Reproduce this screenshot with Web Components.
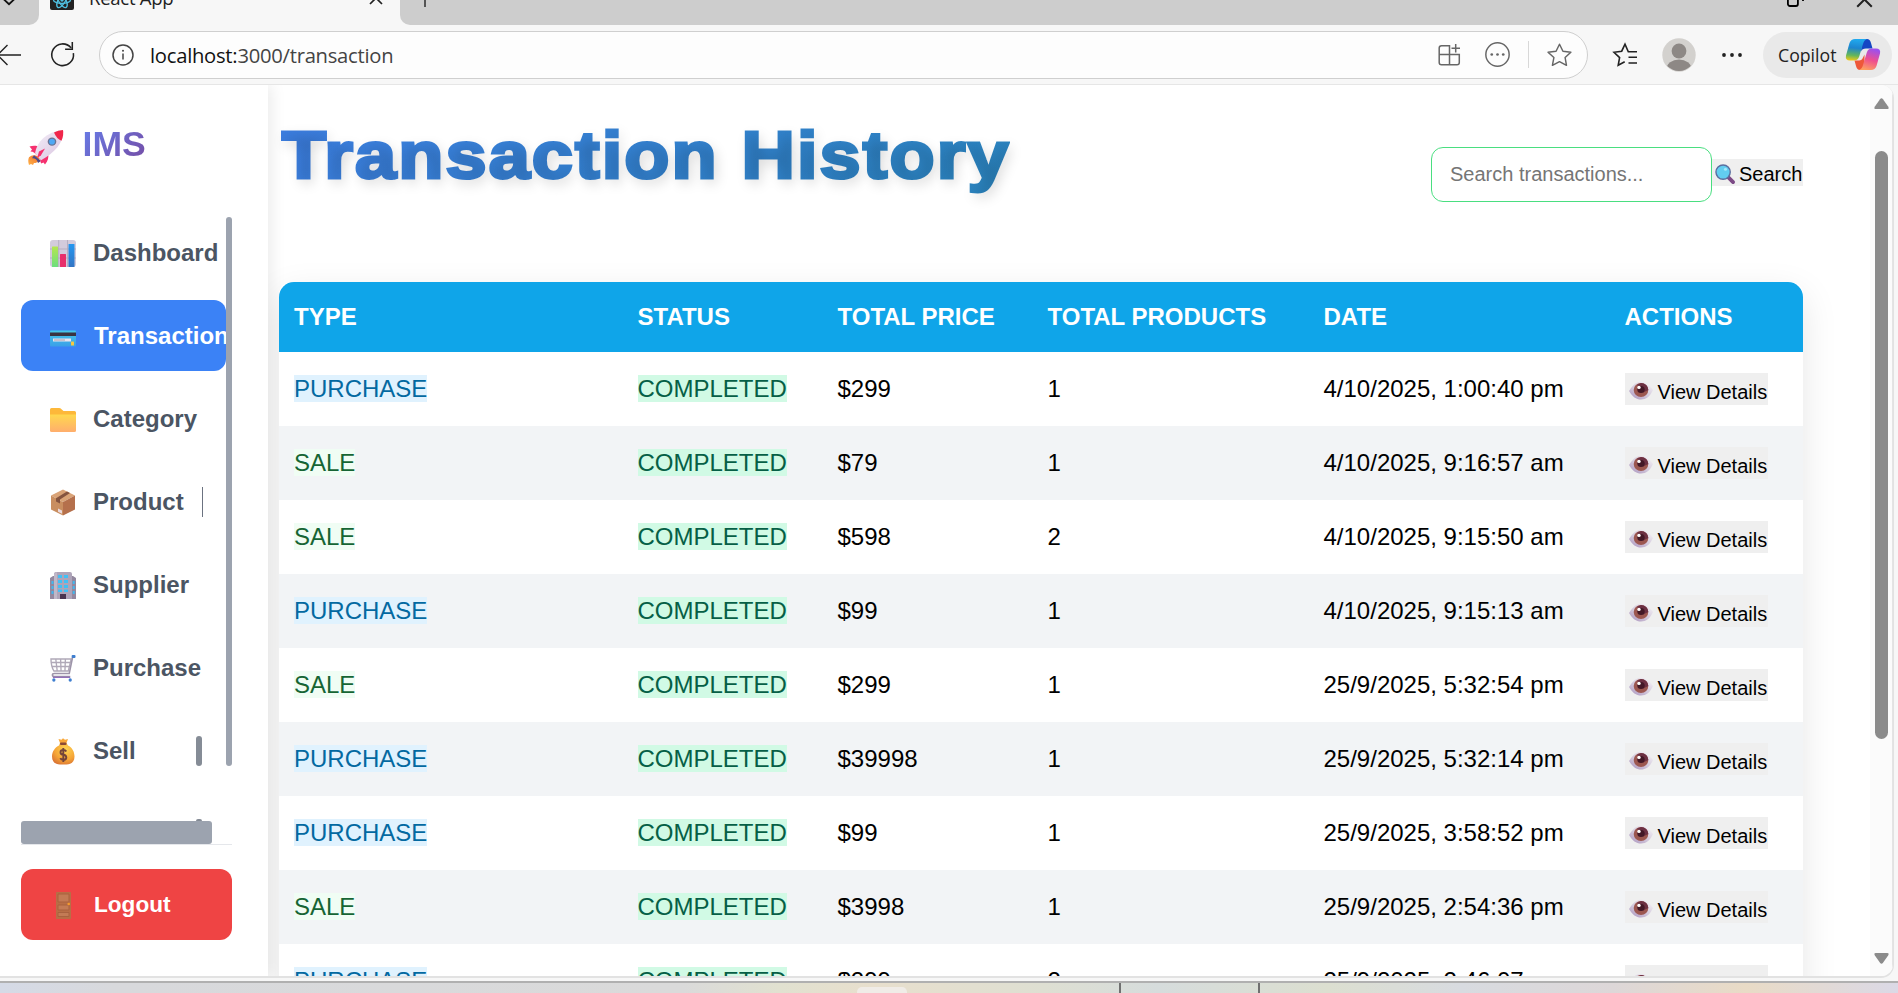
<!DOCTYPE html>
<html lang="en">
<head>
<meta charset="utf-8">
<title>React App</title>
<style>
html,body{margin:0;height:100%;overflow:hidden}
body{font-family:"Liberation Sans",Arial,sans-serif;background:#f7f7f7;color:#000}
</style>
</head>
<body>
<browser-window></browser-window>
<script>
const ICONS = {
rocket:['0 0 36 36','<defs><linearGradient id="r1" x1="0" y1="0" x2="1" y2="1"><stop offset="0" stop-color="#f4eff8"/><stop offset="1" stop-color="#d9c4e0"/></linearGradient><linearGradient id="r2" x1="1" y1="0" x2="0" y2="1"><stop offset="0" stop-color="#ee6a2b"/><stop offset="1" stop-color="#ffb347"/></linearGradient></defs><path d="M1 28c3-3 8-3 11 1-1 4-4 5-6 5l-1 2-2-1-2 1c-1-3-1-6 0-8z" fill="url(#r2)"/><path d="M6 26l7 6-3 2c-1-4-3-5-6-5z" fill="#4a4a8c"/><path d="M1.500 17c4-1.500 8-1 11 1l-4 8c-1-2-3-4-6-4l1.500-2zM12 30l8-6c1 4 0 8-3 11.500l-1.500-2-2.500 1z" fill="#f5316f"/><path d="M7 24C9 12 18 2 35 0c1 13-8 23-22 31z" fill="url(#r1)"/><path d="M26 2.500Q30 .5 35 0q1 5-1.500 11-5-2-7.500-8.500z" fill="#f0264a"/><circle cx="24" cy="12" r="4.300" fill="#687494"/><circle cx="24" cy="12" r="2.900" fill="#4ea8f5"/><path d="M11 22l6-3-4 7-4 3z" fill="#f5316f"/>'],
chart:['0 0 26 27','<defs><linearGradient id="c1" x1="0" y1="0" x2="0" y2="1"><stop offset="0" stop-color="#b5e650"/><stop offset="1" stop-color="#6ddf7f"/></linearGradient><linearGradient id="c2" x1="0" y1="0" x2="0" y2="1"><stop offset="0" stop-color="#2597f0"/><stop offset="1" stop-color="#3375c4"/></linearGradient></defs><rect width="26" height="27" rx="3" fill="#d3cbdc"/><path d="M8.7 0v27M17.5 0v27M0 9h26M0 18h26" stroke="#b0a7ba" stroke-width=".8"/><rect x="2" y="6.500" width="6" height="20.500" rx=".5" fill="url(#c1)"/><rect x="10" y="14" width="6" height="13" rx=".5" fill="#e72f6b"/><rect x="18.500" y="4" width="6" height="23" rx=".5" fill="url(#c2)"/>'],
card:['0 0 26 27','<defs><linearGradient id="k1" x1="0" y1="0" x2="0" y2="1"><stop offset="0" stop-color="#45c8e8"/><stop offset="1" stop-color="#3a9fe8"/></linearGradient></defs><rect y="7.500" width="26" height="16" rx="1" fill="url(#k1)"/><rect y="9.500" width="26" height="3.500" fill="#3a3340"/><rect x="3" y="15.500" width="18" height="3" fill="#e8e3ee"/><path d="M4 17h11" stroke="#a8a2b0"/><rect x="21" y="18.500" width="3" height="4" rx=".6" fill="#f5c842"/>'],
folder:['0 0 26 27','<defs><linearGradient id="f1" x1="0" y1="0" x2="0" y2="1"><stop offset="0" stop-color="#ffd84e"/><stop offset="1" stop-color="#ffae6d"/></linearGradient></defs><path d="M0 3.500Q0 2 1.500 2H9q1.500 0 2.500 1.200L13.500 5H24.500Q26 5 26 6.500V12H0z" fill="#fdb83a"/><path d="M0 8.500h26V24.500Q26 26 24.500 26H1.500Q0 26 0 24.500z" fill="url(#f1)"/>'],
box:['0 0 26 27','<path d="M13 0.500L25 6.500 13 13 1 6.500z" fill="#d9a377"/><path d="M1 6.500L13 13v13.500L1 20.500z" fill="#c98e60"/><path d="M25 6.500L13 13v13.500l12-6z" fill="#b5704c"/><path d="M6 9.200L17 2.600l3 1.500-10 6.500v4l-4-2z" fill="#85543f"/><path d="M8 19.500l4 2v3.200l-4-2z" fill="#ead9dc"/>'],
building:['0 0 26 27','<path d="M0 6l3-2h4v23H0zM19 4h4l3 2v21h-7z" fill="#93889f"/><path d="M4 2Q4 0 6 0h14q2 0 2 2v25H4z" fill="#aea4b9"/><path d="M4 2v25h3V0z" fill="#c0b8c8"/><path d="M8 3h4v3H8zM14 3h4v3h-4zM8 8h4v3H8zM14 8h4v3h-4zM8 13h4v3H8zM14 13h4v3h-4zM8 17.500h4v2.500H8zM14 17.500h4v2.500h-4z" fill="#42c0f5"/><path d="M1.500 9h2v3h-2zM1.500 14h2v3h-2zM1.500 19h2v3h-2zM22.700 9h2v3h-2zM22.700 14h2v3h-2zM22.700 19h2v3h-2z" fill="#42b7ee"/><path d="M10 22h6v5h-6z" fill="#4a3550"/>'],
cart:['0 0 27 27','<path d="M1 4h21l-3 12H4Q1 11 1 4zM1 7.500h20M2 11.500h18.500M6 4l1.500 12M11 4l.5 12M16 4l-.5 12" fill="none" stroke="#b0a9b8" stroke-width="1.400"/><path d="M23.500 2L20 18.500H4.500q-2 0-2 1.500t2 1.500H21" fill="none" stroke="#9d94a9" stroke-width="1.600"/><path d="M3 22.300h18" stroke="#8a63b5" stroke-width="1.200"/><rect x="22.500" y="0" width="4" height="3" rx="1" fill="#3f7fd0"/><circle cx="4" cy="25" r="1.700" fill="#3f7fd0"/><circle cx="21" cy="25" r="1.700" fill="#3f7fd0"/>'],
money:['0 0 26 27','<defs><radialGradient id="m1" cx=".6" cy=".3" r=".8"><stop offset="0" stop-color="#ffd552"/><stop offset=".6" stop-color="#f5a436"/><stop offset="1" stop-color="#d66e34"/></radialGradient></defs><path d="M10 5L8.500 1l3 .8L13 .3l2 1.500 3-.8L16.500 5z" fill="#f9a738"/><path d="M10 5h6.500l1.500 2.500c4 2 6.500 6 6.500 11 0 5-3 8-8 8H10c-5 0-8-3-8-8 0-5 3-9 7-11z" fill="url(#m1)"/><rect x="10" y="4.500" width="6.500" height="2.600" rx="1" fill="#8b4a35"/><path d="M16.300 13.500Q15.500 12 13.300 12 10.500 12 10.500 14.300t2.800 2.500 3 2.600q0 2.400-3 2.400-2.300 0-3-1.600M13.300 10v14" fill="none" stroke="#73443a" stroke-width="1.900"/>'],
door:['0 0 26 27','<rect x="6" y="0" width="15" height="27" rx=".6" fill="#b86e46"/><path d="M8 2h11v8H8zM8 13h11v5H8zM8 20.500h11v4H8z" fill="#c37b55" stroke="#a9623f"/><circle cx="18.700" cy="12" r="1.300" fill="#f59a2c"/>'],
magnifier:['0 0 21 21','<path d="M13 13l6 6" stroke="#7c4a86" stroke-width="4" stroke-linecap="round"/><circle cx="8.500" cy="8.500" r="7.500" fill="#62cdf0" stroke="#5b6f9f" stroke-width="1.500"/><circle cx="11" cy="5.500" r="1.600" fill="#a5e8fb"/>'],
eye:['0 0 24 20','<defs><linearGradient id="e1" x1="0" y1="1" x2=".8" y2="0"><stop offset="0" stop-color="#a78fbb"/><stop offset=".5" stop-color="#d3c9dc"/><stop offset="1" stop-color="#f4f1f6"/></linearGradient></defs><path d="M0 10.500C4 3.500 8 .8 12 .8s8 2.700 12 8.700c-3 7-7 10-12 10S3.500 16.500 0 10.500z" fill="url(#e1)"/><circle cx="12" cy="9.500" r="7.300" fill="#9c5750"/><path d="M12 2.200a7.300 7.300 0 0 1 7.300 7.300L14 12 8 4z" fill="#6b2f42"/><circle cx="12" cy="9" r="3.700" fill="#431827"/><circle cx="10" cy="6.800" r="1.700" fill="#fff"/>'],
back:['0 0 21 20','<path d="M21 10H-4M7.500 0L-2.500 10 7.500 20" fill="none" stroke="#222" stroke-width="1.400"/>'],
reload:['0 0 26 26','<path d="M24.300 11.500A11.300 11.300 0 1 1 21.800 6M23.200 0v7.500h-7.500" fill="none" stroke="#222" stroke-width="1.600"/>'],
info:['0 0 22 22','<circle cx="11" cy="11" r="10" fill="none" stroke="#444" stroke-width="1.500"/><path d="M11 9.500v6" stroke="#444" stroke-width="1.500"/><circle cx="11" cy="6.700" r="1" fill="#444"/>'],
apps:['0 0 23 23','<path d="M11.500 11.500V2.700H3.500Q1.200 2.700 1.200 5v14.500Q1.200 21.800 3.500 21.800H19Q21.300 21.800 21.300 19.500v-8H1.200M11.500 21.800V11.500M17.700 1v8.500M13.500 5.300h8.500" fill="none" stroke="#666" stroke-width="1.500"/>'],
dots:['0 0 24 24','<circle cx="12" cy="12" r="11.200" fill="none" stroke="#666" stroke-width="1.400"/><circle cx="6.500" cy="12" r="1.300" fill="#666"/><circle cx="12" cy="12" r="1.300" fill="#666"/><circle cx="17.500" cy="12" r="1.300" fill="#666"/>'],
star:['0 0 24 24','<path d="M12 1.200l3.300 7 7.600 1.100-5.500 5.300 1.300 7.700-6.700-3.700-6.800 3.700 1.400-7.700L1 9.300l7.700-1.100z" fill="none" stroke="#666" stroke-width="1.400" stroke-linejoin="round"/>'],
favs:['0 0 24 24','<path d="M24 8.800H15.300L12 1.200l-3.300 7L1 9.300l5.600 5.300-1.400 7.700 6.500-3.500M15.500 14.300H24M15.500 20H24" fill="none" stroke="#222" stroke-width="1.600"/>'],
avatar:['0 0 34 34','<defs><clipPath id="a1"><circle cx="17" cy="17" r="16"/></clipPath></defs><circle cx="17" cy="17" r="16.700" fill="#d3d1ce"/><circle cx="17" cy="13" r="7.400" fill="#8d8885"/><ellipse cx="17" cy="31" rx="12.500" ry="9.500" fill="#8d8885" clip-path="url(#a1)"/>'],
more:['0 0 20 4','<circle cx="2" cy="2" r="1.900" fill="#222"/><circle cx="10" cy="2" r="1.900" fill="#222"/><circle cx="18" cy="2" r="1.900" fill="#222"/>'],
copilot:['0 0 34 31','<defs><linearGradient id="p1" x1=".3" y1="0" x2=".2" y2="1"><stop offset="0" stop-color="#20a9ee"/><stop offset=".4" stop-color="#1d85cf"/><stop offset=".75" stop-color="#64b65b"/><stop offset="1" stop-color="#f4ca16"/></linearGradient><linearGradient id="p2" x1=".6" y1="0" x2=".3" y2="1"><stop offset="0" stop-color="#9c50ee"/><stop offset=".5" stop-color="#ee4f90"/><stop offset="1" stop-color="#ffa15f"/></linearGradient></defs><path d="M16 0h5q3 0 4 4l1.500 5.500H20q-4 0-5 3z" fill="#1546c4"/><path d="M8.500 21.500H13q3 0 4-3l1.500-3V31H14q-3 0-4-4z" fill="#ee5839"/><path d="M9 0h12q-3 1-4 5l-3.800 12.500q-1.200 4-5.200 4H4q-5 0-4-5L3.500 4Q5 0 9 0z" fill="url(#p1)"/><path d="M25 31H13q3-1 4-5l3.800-12.500q1.200-4 5.200-4h4q5 0 4 5L30.500 27Q29 31 25 31z" fill="url(#p2)"/>'],
react:['0 0 24 24','<rect width="24" height="24" rx="2" fill="#222"/><g fill="none" stroke="#4fbfe0" stroke-width="1.400"><ellipse cx="12" cy="12" rx="8.500" ry="3.500" transform="translate(0 2)"/><ellipse cx="12" cy="14" rx="8.500" ry="3.500" transform="rotate(60 12 14)"/><ellipse cx="12" cy="14" rx="8.500" ry="3.500" transform="rotate(120 12 14)"/></g><circle cx="12" cy="14" r="1.700" fill="#4fbfe0"/>'],
chevron:['0 0 14 8','<path d="M1.500 1l5.500 5.200L12.500 1" fill="none" stroke="#111" stroke-width="1.800"/>'],
close:['0 0 14 14','<path d="M1 1l12 12M13 1L1 13" stroke="#222" stroke-width="1.700"/>'],
plus:['0 0 16 16','<path d="M8 0v16M0 8h16" stroke="#222" stroke-width="1.400"/>'],
restore:['0 0 18 18','<path d="M4 1h8q5 0 5 5v6" fill="none" stroke="#000" stroke-width="1.800"/><rect x="1.900" y="5" width="10" height="12" rx="2" fill="none" stroke="#000" stroke-width="1.800"/>'],
up:['0 0 15 11','<path d="M6 1.200q1.500-2 3 0l5.300 7.500q1 2.300-1 2.300H1.700Q-.3 11 .7 8.700z" fill="#8b8b8b"/>'],
down:['0 0 15 11','<path d="M6 9.800q1.500 2 3 0l5.300-7.500q1-2.300-1-2.300H1.700Q-.3 0 .7 2.300z" fill="#8b8b8b"/>']
};
function define(name, html, setup){
  const tpl = document.createElement('template');
  tpl.innerHTML = html;
  customElements.define(name, class extends HTMLElement{
    constructor(){
      super();
      this.attachShadow({mode:'open'}).appendChild(tpl.content.cloneNode(true));
    }
    connectedCallback(){ if(setup) setup(this, this.shadowRoot); }
  });
}
define('ui-icon','<style>:host{display:block;flex:none}div{width:100%;height:100%}svg{display:block;width:100%;height:100%;overflow:visible}</style><div></div>',(el,root)=>{
  const [box,body]=ICONS[el.getAttribute('name')];
  el.style.width=el.getAttribute('w')+'px';
  el.style.height=el.getAttribute('h')+'px';
  root.querySelector('div').innerHTML='<svg viewBox="'+box+'" preserveAspectRatio="none">'+body+'</svg>';
});
define('tab-strip',`<style>
:host{display:flex;height:25px;background:#f7f7f7;overflow:hidden;font:20px/20px "Open Sans",sans-serif}
.left{width:39px;background:#cdcdcd;border-radius:0 0 10px 0;box-sizing:border-box;padding:0 0 0 2px}
.tab{width:361px;display:flex;align-items:flex-start;box-sizing:border-box;padding-left:11px}
.tab span{margin:-12px 0 0 15px;color:#222;flex:1;white-space:nowrap;font-size:18.6px;letter-spacing:-.3px}
.rest{flex:1;background:#cdcdcd;border-radius:0 0 0 10px;display:flex;padding-left:17px}
.gap{flex:1}
</style>
<div class="left"><ui-icon name="chevron" w="14" h="8" style="margin-top:-2px"></ui-icon></div>
<div class="tab"><ui-icon name="react" w="24" h="24" style="margin-top:-14px"></ui-icon><span>React App</span><ui-icon name="close" w="14" h="14" style="margin:-9px 17px 0 0"></ui-icon></div>
<div class="rest"><ui-icon name="plus" w="16" h="16" style="margin-top:-9px"></ui-icon><div class="gap"></div><ui-icon name="restore" w="18" h="18" style="margin:-11px 52px 0 0"></ui-icon><ui-icon name="close" w="17" h="17" style="margin:-9px 25px 0 0"></ui-icon></div>`);
define('browser-toolbar',`<style>
:host{display:flex;align-items:center;height:60px;box-sizing:border-box;border-bottom:1px solid #e6e6e6;background:#f7f7f7;font-family:"Open Sans",sans-serif;padding-right:6px}
.bar{width:1489px;height:48px;box-sizing:border-box;margin:0 0 0 24px;border:1.5px solid #cfcfcf;border-radius:24px;background:#fdfdfd;display:flex;align-items:center;padding:0 15px 0 12px}
.url{margin-left:16px;font-size:20.2px;letter-spacing:-.25px;color:#444;flex:1;white-space:nowrap}
.url b{font-weight:400;color:#111}
.sep{width:1.5px;height:27px;background:#d8d8d8;margin:0 18px}
.copilot{width:129px;height:46px;border-radius:23px;background:#e9e9e9;display:flex;align-items:center;box-sizing:border-box;padding:0 12px 0 15px;justify-content:space-between;font-size:17.700px;color:#222;margin-left:21px}
</style>
<ui-icon name="back" w="21" h="20"></ui-icon><ui-icon name="reload" w="25" h="25" style="margin-left:29px"></ui-icon>
<div class="bar"><ui-icon name="info" w="22" h="22"></ui-icon><div class="url"><b>localhost:</b>3000/transaction</div>
<ui-icon name="apps" w="23" h="23"></ui-icon><ui-icon name="dots" w="25" h="25" style="margin-left:24px"></ui-icon><div class="sep"></div><ui-icon name="star" w="25" h="24"></ui-icon></div>
<ui-icon name="favs" w="24" h="24" style="margin-left:25px"></ui-icon><ui-icon name="avatar" w="34" h="34" style="margin-left:25px"></ui-icon><ui-icon name="more" w="20" h="4" style="margin-left:26px"></ui-icon>
<div class="copilot"><span>Copilot</span><ui-icon name="copilot" w="34" h="31"></ui-icon></div>`);
define('nav-item',`<style>
:host{display:flex;align-items:center;height:71px;border-radius:12px;box-sizing:border-box;padding-left:29px;font-size:24px;font-weight:700;color:#4b5563;flex:none;position:relative;white-space:nowrap}
:host([active]){background:#3b82f6;color:#fff}
:host([danger]){background:#ef4444;color:#fff;font-size:22.6px}
.label{margin-left:17px;line-height:27px}
:host([active]) .label,:host([danger]) .label{margin-left:18px}
ui-icon{margin-top:2px}
i{position:absolute;right:23px;top:21px;width:1px;height:30px;background:#6b7280}
i.thick{width:6px;border-radius:3px;background:#858c96;right:24px;top:21px}
</style><span class="icon"></span><span class="label"><slot></slot></span>`,(el,root)=>{
  root.querySelector('.icon').innerHTML='<ui-icon name="'+el.getAttribute('icon')+'" w="26" h="27"></ui-icon>';
  const bar=el.getAttribute('bar');
  if(bar){const i=document.createElement('i');i.className=bar;root.append(i);}
});
define('side-bar',`<style>
:host{display:flex;flex-direction:column;width:268px;height:891px;box-sizing:border-box;padding:0 36px 36px 21px;background:#fff;box-shadow:3px 0 15px rgba(0,0,0,.085)}
.brand{display:flex;align-items:center;height:60px;margin-top:29px;padding-left:7px}
.brand span{margin:0 0 0 18.5px;font-size:35.6px;line-height:42px;font-weight:700;background:linear-gradient(135deg,#667eea,#764ba2);-webkit-background-clip:text;color:transparent}
.brand ui-icon{margin-top:6px}
nav{height:627px;margin-top:43px;display:grid;grid-template-columns:205px 6px;grid-template-rows:604px 23px}
.items{display:flex;flex-direction:column;gap:12px;height:604px;min-width:0}
.v{height:549px;background:#9ca3af;border-radius:3px;position:relative}
.h{width:191px;height:23px;background:#9ca3af;border-radius:3px}
.bump{width:6px;height:2px;margin:21px 0 0 175px;border-radius:3px 3px 0 0;background:#858c96;flex:none}
.foot{border-top:1px solid #e5e7eb;padding-top:24px;}
</style>
<div class="brand"><ui-icon name="rocket" w="36" h="35"></ui-icon><span>IMS</span></div>
<nav><div class="items">
<nav-item icon="chart">Dashboard</nav-item><nav-item icon="card" active>Transaction</nav-item><nav-item icon="folder">Category</nav-item><nav-item icon="box" bar="thin">Product</nav-item><nav-item icon="building">Supplier</nav-item><nav-item icon="cart">Purchase</nav-item><nav-item icon="money" bar="thick">Sell</nav-item><div class="bump"></div>
</div><div class="v"></div><div class="h"></div></nav>
<div class="foot"><nav-item icon="door" danger>Logout</nav-item></div>`);
define('page-header',`<style>
:host{display:flex;justify-content:space-between;height:197px;flex:none}
h1{margin:23px 0 0 1.500px;font-size:67.2px;line-height:94px;height:94px;font-weight:700;letter-spacing:1.9px;white-space:nowrap;transform:scaleX(1.1);transform-origin:0 0;background:linear-gradient(135deg,#3d7ee2,#2a84bd);-webkit-background-clip:text;color:transparent;-webkit-text-stroke:3px transparent;text-shadow:3px 5px 12px rgba(0,0,0,.17)}
.search{display:flex;align-items:center;height:55px;margin-top:62px}
.field{width:281px;height:55px;box-sizing:border-box;border:1.5px solid #4ade80;border-radius:12px;padding-left:18px;font-size:20px;line-height:53px;color:#757575;background:#fff}
.btn{width:91px;height:27px;background:#efefef;display:flex;align-items:center;font-size:20px;line-height:23px;margin-top:-4px;white-space:nowrap}
.btn ui-icon{margin:3px 4px 0 3px}
.btn span{margin-top:3px}
</style><h1>Transaction History</h1><div class="search"><div class="field">Search transactions...</div><div class="btn"><ui-icon name="magnifier" w="20" h="20"></ui-icon><span>Search</span></div></div>`);
define('status-tag',`<style>
:host{display:inline-block;height:27px;line-height:27px;background:#d1fae5;color:#065f46}
:host([kind="PURCHASE"]){background:#e0f2fe;color:#0369a1}
:host([kind="SALE"]){background:#f0fdf4;color:#166534}
</style><slot></slot>`);
define('view-button',`<style>
:host{display:flex;align-items:center;width:143px;height:32px;background:#efefef;font-size:20px;line-height:23px;white-space:nowrap;box-sizing:border-box;padding:7px 0 0 4px}
ui-icon{margin:-4px 5px 0 0}
</style><ui-icon name="eye" w="24" h="19"></ui-icon><span>View Details</span>`);
define('transaction-table',`<style>
:host{display:block;border-radius:12px 12px 0 0;box-shadow:0 12px 36px rgba(0,0,0,.1);font-size:24px;background:#fff;flex:none}
.row{display:grid;grid-template-columns:343.5px 200px 210px 276px 301px 178px;padding-left:15px;height:74px;align-items:center;line-height:27px;white-space:nowrap}
.head{height:70px;background:#0fa5e9;color:#fff;font-weight:700;border-radius:15px 15px 0 0;padding-bottom:1px;box-sizing:border-box}
.data{box-sizing:border-box;padding-bottom:2px}
.data view-button{margin-top:2px}
.data:nth-of-type(even){background:#fff}
.data:nth-of-type(odd){background:#f2f4f6}
</style><div class="row head"><span>TYPE</span><span>STATUS</span><span>TOTAL PRICE</span><span>TOTAL PRODUCTS</span><span>DATE</span><span>ACTIONS</span></div>`,(el,root)=>{
  [['PURCHASE','$299','1','4/10/2025, 1:00:40 pm'],['SALE','$79','1','4/10/2025, 9:16:57 am'],['SALE','$598','2','4/10/2025, 9:15:50 am'],['PURCHASE','$99','1','4/10/2025, 9:15:13 am'],['SALE','$299','1','25/9/2025, 5:32:54 pm'],['PURCHASE','$39998','1','25/9/2025, 5:32:14 pm'],['PURCHASE','$99','1','25/9/2025, 3:58:52 pm'],['SALE','$3998','1','25/9/2025, 2:54:36 pm'],['PURCHASE','$299','2','25/9/2025, 2:46:07 pm']].forEach(r=>{
    const d=document.createElement('div');d.className='row data';
    d.innerHTML=`<span><status-tag kind="${r[0]}">${r[0]}</status-tag></span><span><status-tag>COMPLETED</status-tag></span><span>${r[1]}</span><span>${r[2]}</span><span>${r[3]}</span><view-button></view-button>`;
    root.append(d);
  });
});
define('scroll-track',`<style>
:host{display:flex;flex-direction:column;align-items:center;width:23px;background:#fbfbfb;box-sizing:border-box;padding:13px 0 12px;border-right:1px solid #e4e4e4}
.thumb{width:13px;height:588px;border-radius:7px;background:#8b8b8b;margin:42px 0 auto}
</style><ui-icon name="up" w="15" h="11"></ui-icon><div class="thumb"></div><ui-icon name="down" w="15" h="11"></ui-icon>`);
define('task-strip',`<style>
:host{display:block;height:12px;box-sizing:border-box;border-top:2px solid #b0b0b0;background:linear-gradient(90deg,#d5dae6 0,#d8d9dc 6%,#dadada 36%,#e1e1d0 41%,#e8dfcd 46%,#dedfd2 55%,#d6dcdc 61%,#dcdfd0 70%,#d8dbe0 77%,#ddd7d8 85%,#e9dbc6 92%,#dbd9e6 100%)}
div{display:grid;grid-template-columns:856px 263px 139px 1fr;height:10px}
b{width:50px;height:6px;background:#f0ece7;border-radius:5px 5px 0 0;margin:4px 0 0 1px}
i{width:2px;height:10px;background:#707070}
</style><div><span></span><b></b><i></i><i></i></div>`);
define('browser-window',`<style>
:host{display:flex;flex-direction:column;width:1898px;height:993px;overflow:hidden;background:#f7f7f7}
.page{height:891px;width:1893px;display:flex;background:#fff;border-radius:0 12px 12px 0;overflow:hidden;box-shadow:0 1px 0 1px #e2e2e2;flex:none}
main{flex:1;display:flex;flex-direction:column;padding:0 67px 0 11px;height:891px;overflow:hidden;box-sizing:border-box}
side-bar{flex:none}
task-strip{margin-top:auto}
</style><tab-strip></tab-strip><browser-toolbar></browser-toolbar>
<div class="page"><side-bar></side-bar><main><page-header></page-header><transaction-table></transaction-table></main><scroll-track></scroll-track></div><task-strip></task-strip>`);
</script>
</body>
</html>
